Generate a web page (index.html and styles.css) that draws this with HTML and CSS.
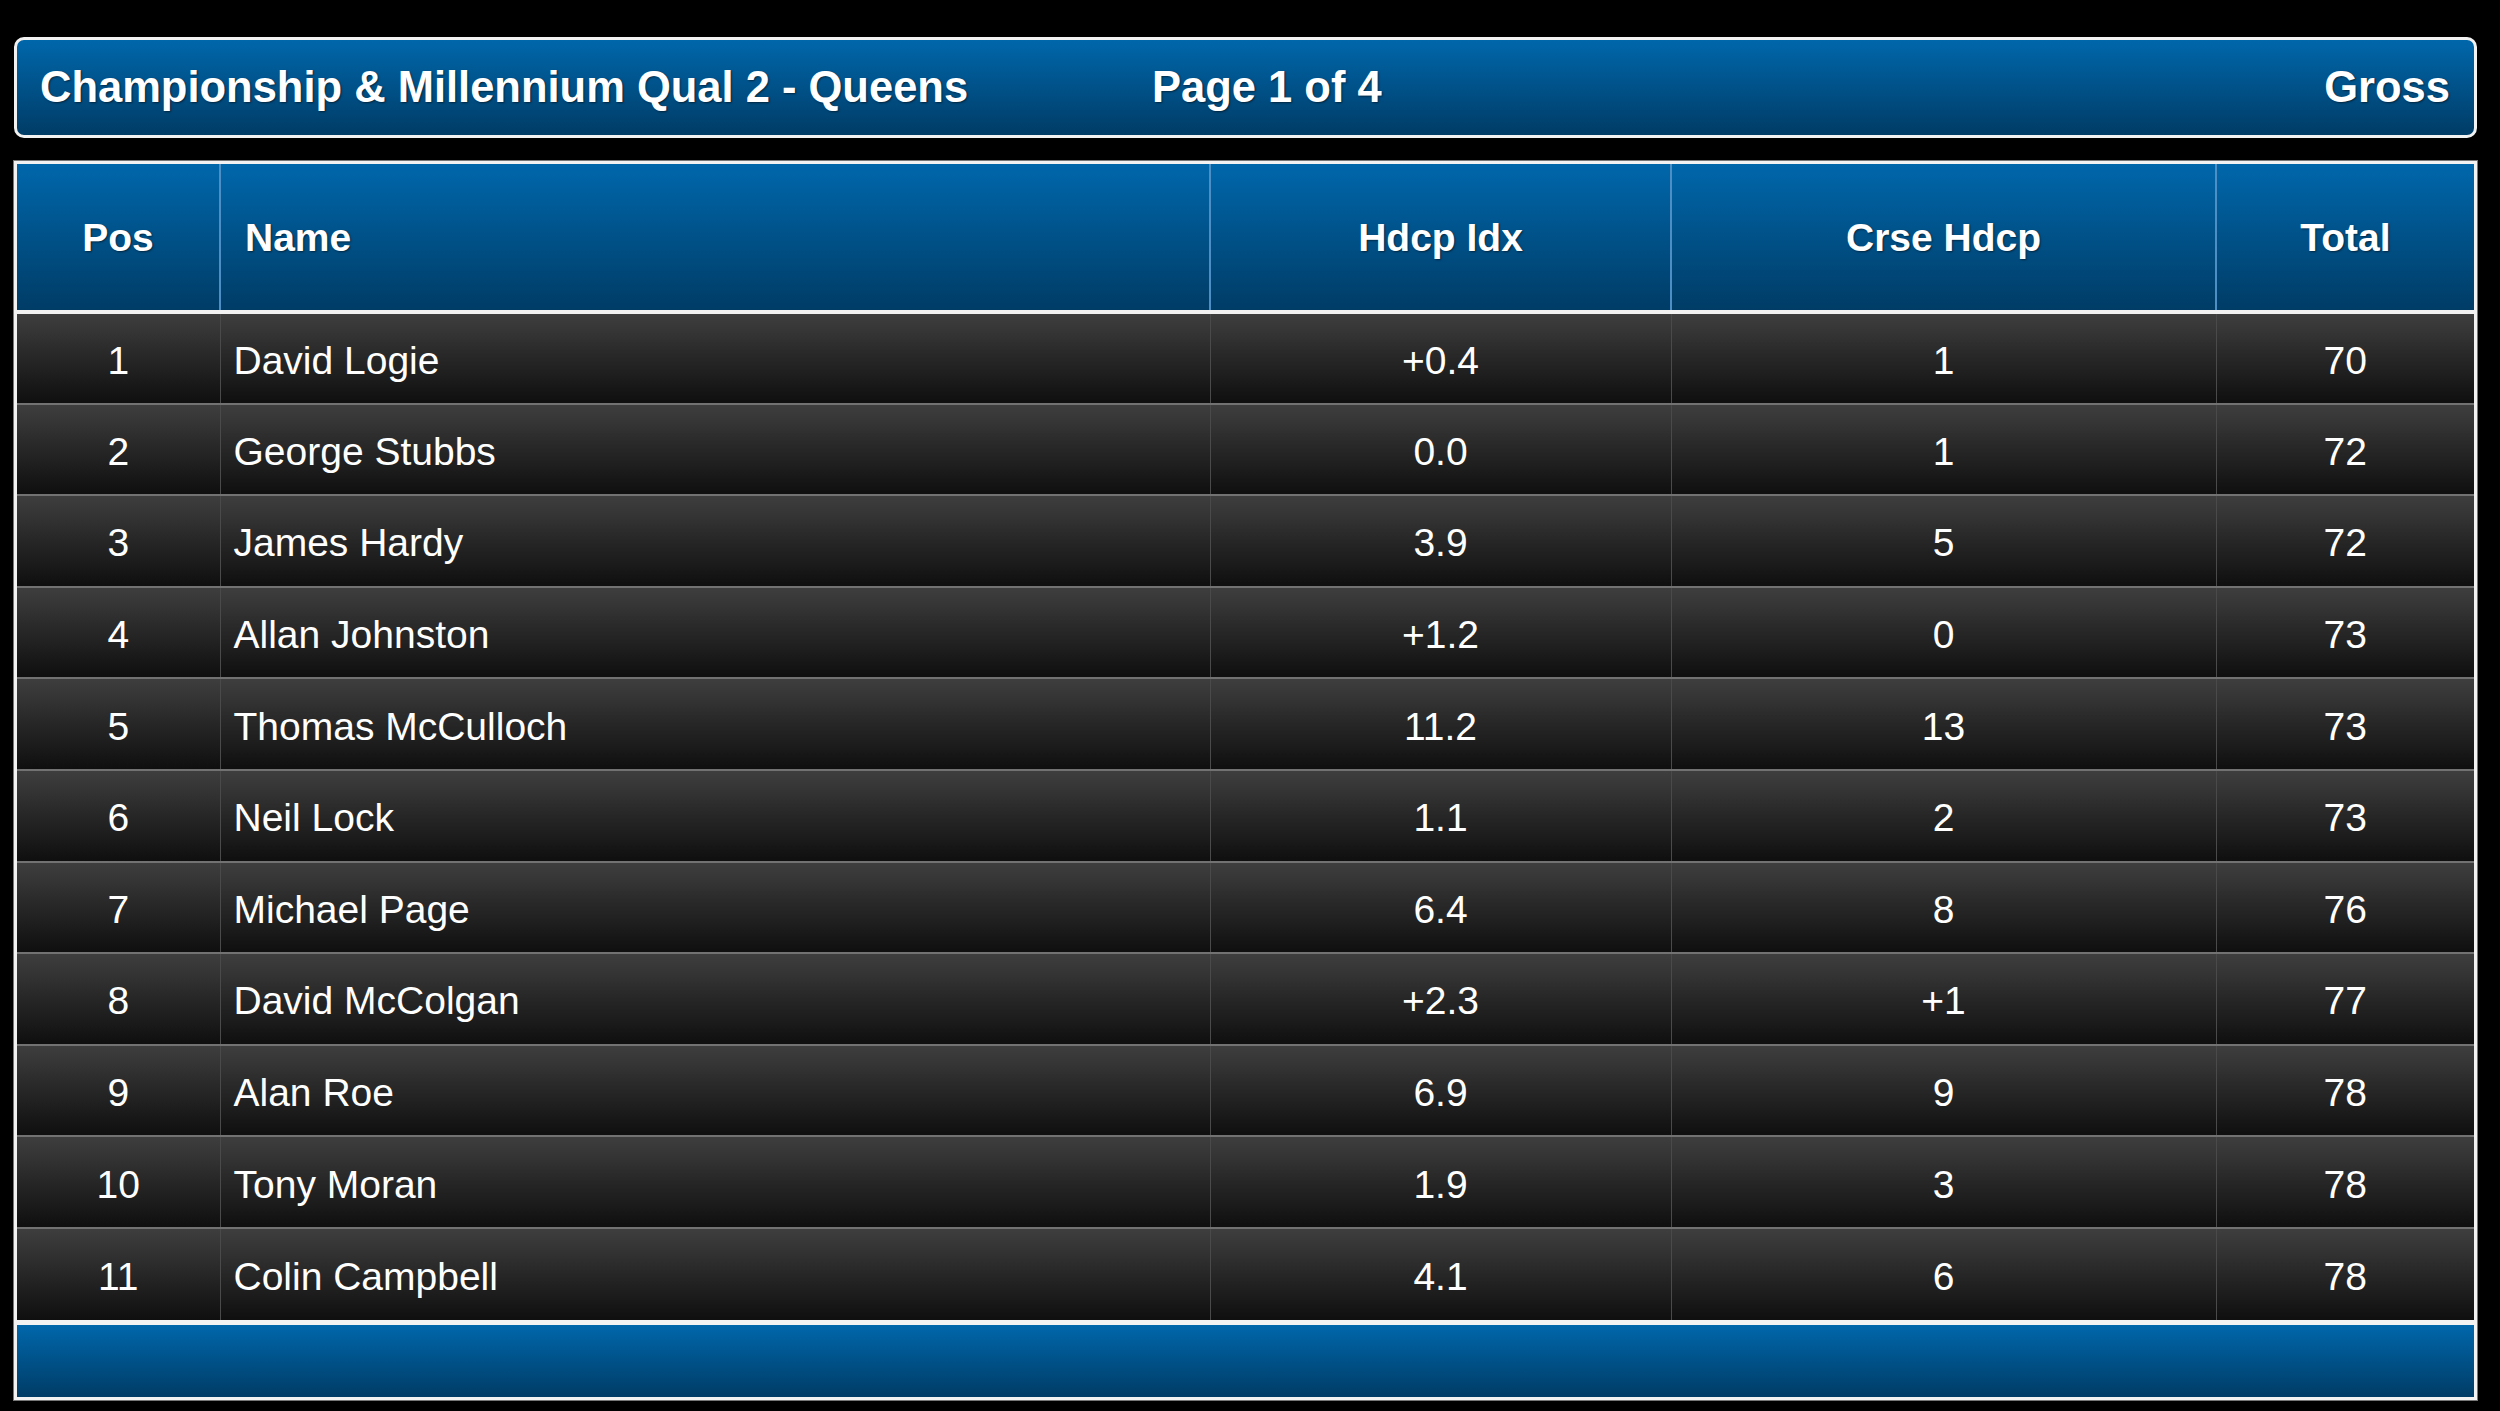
FILE: index.html
```html
<html>
<head>
    <title>Championship &amp; Millennium Qual 2 - Queens</title>
    <link rel="stylesheet" href="styles.css">
</head>
<body>
<main class="board">
    <header class="board-title">
        <span class="title-name">Championship &amp; Millennium Qual 2 - Queens</span>
        <span class="title-page">Page 1 of 4</span>
        <span class="title-type">Gross</span>
    </header>
    <section class="results">
        <table class="results-table">
            <colgroup>
                <col class="col-pos">
                <col class="col-name">
                <col class="col-idx">
                <col class="col-crse">
                <col class="col-total">
            </colgroup>
            <thead>
                <tr>
                    <th>Pos</th>
                    <th class="name-cell">Name</th>
                    <th>Hdcp Idx</th>
                    <th>Crse Hdcp</th>
                    <th>Total</th>
                </tr>
            </thead>
            <tbody>
                <tr><td>1</td><td class="name-cell">David Logie</td><td>+0.4</td><td>1</td><td>70</td></tr>
                <tr><td>2</td><td class="name-cell">George Stubbs</td><td>0.0</td><td>1</td><td>72</td></tr>
                <tr><td>3</td><td class="name-cell">James Hardy</td><td>3.9</td><td>5</td><td>72</td></tr>
                <tr><td>4</td><td class="name-cell">Allan Johnston</td><td>+1.2</td><td>0</td><td>73</td></tr>
                <tr><td>5</td><td class="name-cell">Thomas McCulloch</td><td>11.2</td><td>13</td><td>73</td></tr>
                <tr><td>6</td><td class="name-cell">Neil Lock</td><td>1.1</td><td>2</td><td>73</td></tr>
                <tr><td>7</td><td class="name-cell">Michael Page</td><td>6.4</td><td>8</td><td>76</td></tr>
                <tr><td>8</td><td class="name-cell">David McColgan</td><td>+2.3</td><td>+1</td><td>77</td></tr>
                <tr><td>9</td><td class="name-cell">Alan Roe</td><td>6.9</td><td>9</td><td>78</td></tr>
                <tr><td>10</td><td class="name-cell">Tony Moran</td><td>1.9</td><td>3</td><td>78</td></tr>
                <tr><td>11</td><td class="name-cell">Colin Campbell</td><td>4.1</td><td>6</td><td>78</td></tr>
            </tbody>
        </table>
        <div class="results-footer"></div>
    </section>
</main>
</body>
</html>
```

FILE: styles.css
```css
body {
    margin: 0;
    background: #000;
    font-family: "Liberation Sans", Arial, sans-serif;
    color: #fff;
}

.board {
    padding: 37px 23px 0 14px;
}

.board-title {
    height: 95px;
    display: grid;
    grid-template-columns: 1112px 1fr auto;
    align-items: center;
    padding: 0 24px 0 23px;
    border: 3px solid #f2f2f2;
    border-radius: 10px;
    background: linear-gradient(#0067ab, #003c66);
    font-size: 43.5px;
    font-weight: bold;
    text-shadow: 1px 1px 2px rgba(0,0,0, .5);
}

.results {
    margin-top: 23px;
    border: 3px solid #f2f2f2;
    box-shadow: 0 0 0 1px #777;
}

.results-table {
    width: 100%;
    border-collapse: collapse;
    table-layout: fixed;
}

.col-pos {
    width: 203px;
}

.col-name {
    width: 990px;
}

.col-idx {
    width: 461px;
}

.col-crse {
    width: 545px;
}

.results-table th {
    height: 148px;
    padding: 2px 0 0;
    font-size: 39px;
    font-weight: bold;
    text-align: center;
    background: linear-gradient(#0067ab, #003c66);
    border-left: 2px solid #4d8fc4;
    border-bottom: 4px solid #f2f2f2;
    text-shadow: 1px 1px 2px rgba(0,0,0, .5);
}

.results-table td {
    height: 91.6px;
    padding: 5px 0 0;
    font-size: 39px;
    text-align: center;
    background: linear-gradient(#3e3e3e, #0f0f0f);
    border-top: 2px solid #727272;
    border-left: 1px solid #4a4a4a;
}

.results-table th:first-child,
.results-table td:first-child {
    border-left: none;
}

.results-table tbody tr:first-child td {
    border-top-color: #8a8a8a;
}

.results-table th.name-cell {
    text-align: left;
    padding-left: 24px;
}

.results-table td.name-cell {
    text-align: left;
    padding-left: 13px;
}

.results-footer {
    height: 72px;
    border-top: 5px solid #f2f2f2;
    background: linear-gradient(#0067ab, #003c66);
}
```
